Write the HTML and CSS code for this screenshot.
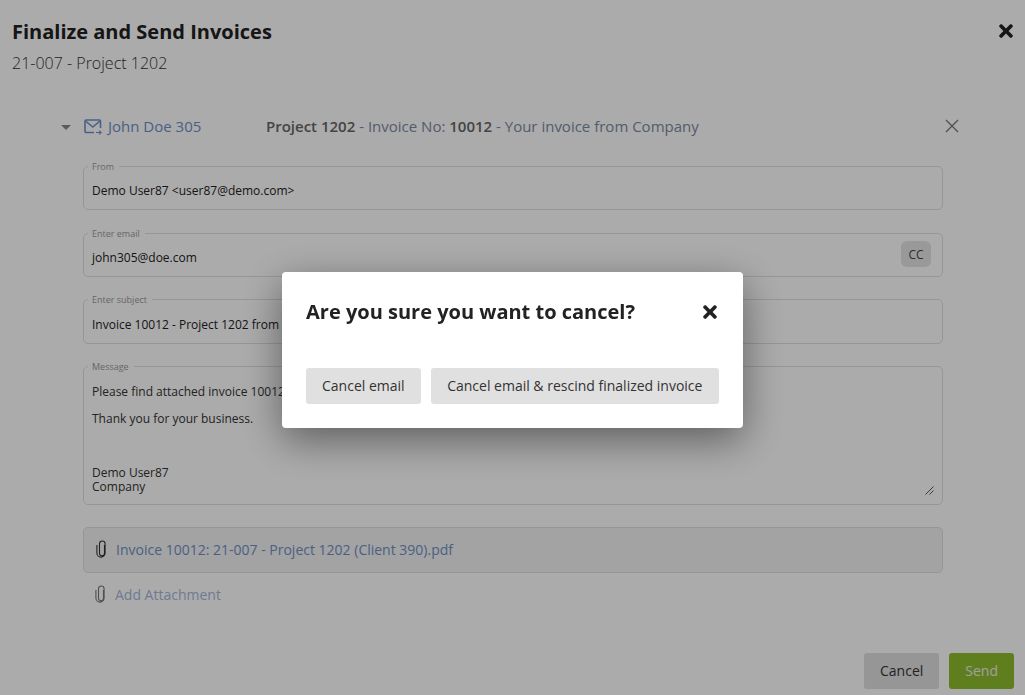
FILE: index.html
```html
<!DOCTYPE html>
<html lang="en">
<head>
<meta charset="utf-8">
<title>Finalize and Send Invoices</title>
<link rel="stylesheet" href="styles.css">
</head>
<body>
<main class="page">
  <header class="page-head">
    <div>
      <h1 class="page-title">Finalize and Send Invoices</h1>
      <p class="page-sub">21-007 - Project 1202</p>
    </div>
    <svg class="x-bold page-close" viewBox="0 0 352 512"><path d="M242.72 256l100.07-100.07c12.28-12.28 12.28-32.19 0-44.48l-22.24-22.24c-12.28-12.28-32.19-12.28-44.48 0L176 189.28 75.93 89.21c-12.28-12.28-32.19-12.28-44.48 0L9.21 111.45c-12.28 12.28-12.28 32.19 0 44.48L109.28 256 9.21 356.07c-12.28 12.28-12.28 32.19 0 44.48l22.24 22.24c12.28 12.28 32.2 12.28 44.48 0L176 322.72l100.07 100.07c12.28 12.28 32.2 12.28 44.48 0l22.24-22.24c12.28-12.28 12.28-32.19 0-44.48L242.72 256z"/></svg>
  </header>

  <section class="mail">
    <div class="mail-row">
      <span class="caret"></span>
      <svg class="mail-icon" viewBox="0 0 18 16"><path d="M10 13.500H2.200A1.200 1.200 0 0 1 1 12.300V2.200A1.200 1.200 0 0 1 2.200 1h13.100a1.200 1.200 0 0 1 1.200 1.200V9" /><path d="M1.500 2 8.800 8l7.200-6"/><path d="M12 13.500h5M15.200 11.600l1.900 1.900-1.900 1.900" class="thin"/></svg>
      <span class="mail-name">John Doe 305</span>
      <span class="mail-subject"><b>Project 1202</b> - Invoice No: <b>10012</b> - Your invoice from Company</span>
      <svg class="mail-close" viewBox="0 0 14 14"><path d="M1 1l12 12M13 1 1 13"/></svg>
    </div>

    <div class="fields">
      <fieldset class="field field-from">
        <legend>From</legend>
        <div class="value">Demo User87 &lt;user87@demo.com&gt;</div>
      </fieldset>
      <fieldset class="field field-email">
        <legend>Enter email</legend>
        <div class="value">john305@doe.com</div>
        <span class="cc">CC</span>
      </fieldset>
      <fieldset class="field field-subject">
        <legend>Enter subject</legend>
        <div class="value value-subject">Invoice 10012 - Project 1202 from Company</div>
      </fieldset>
      <fieldset class="field field-message">
        <legend>Message</legend>
        <div class="message">
          <p class="para">Please find attached invoice 10012.</p>
          <p class="para">Thank you for your business.</p>
          <p class="sign">Demo User87<br>Company</p>
        </div>
        <svg class="grip" viewBox="0 0 9 9"><path d="M0.500 8.500l8-8M4.500 8.500l4-4"/></svg>
      </fieldset>
      <div class="attachment">
        <svg class="clip" viewBox="0 0 12 18"><path d="M8.500 5v8.200a2.500 2.500 0 0 1-5 0V3.800a2.800 2.800 0 0 1 5.600 0V13a4.100 4.100 0 0 1-8.200 0V5"/></svg>
        <span>Invoice 10012: 21-007 - Project 1202 (Client 390).pdf</span>
      </div>
      <div class="add">
        <svg class="clip clip-add" viewBox="0 0 12 18"><path d="M8.500 5v8.200a2.500 2.500 0 0 1-5 0V3.800a2.800 2.800 0 0 1 5.600 0V13a4.100 4.100 0 0 1-8.200 0V5"/></svg>
        <span>Add Attachment</span>
      </div>
    </div>
  </section>

  <footer class="page-foot">
    <button class="btn btn-grey">Cancel</button>
    <button class="btn btn-send">Send</button>
  </footer>
</main>

<div class="overlay">
  <div class="modal">
    <div class="modal-head">
      <h2 class="modal-title">Are you sure you want to cancel?</h2>
      <svg class="x-bold modal-close" viewBox="0 0 352 512"><path d="M242.72 256l100.07-100.07c12.28-12.28 12.28-32.19 0-44.48l-22.24-22.24c-12.28-12.28-32.19-12.28-44.48 0L176 189.28 75.93 89.21c-12.28-12.28-32.19-12.28-44.48 0L9.21 111.45c-12.28 12.28-12.28 32.19 0 44.48L109.28 256 9.21 356.07c-12.28 12.28-12.28 32.19 0 44.48l22.24 22.24c12.28 12.28 32.2 12.28 44.48 0L176 322.72l100.07 100.07c12.28 12.28 32.2 12.28 44.48 0l22.24-22.24c12.28-12.28 12.28-32.19 0-44.48L242.72 256z"/></svg>
    </div>
    <div class="modal-actions">
      <button class="btn btn-grey">Cancel email</button>
      <button class="btn btn-grey btn-fill">Cancel email &amp; rescind finalized invoice</button>
    </div>
  </div>
</div>
</body>
</html>
```
FILE: styles.css
```css
* { box-sizing: border-box; }
html, body { margin: 0; height: 100%; }
body {
  background: #fff;
  color: #222;
  font-family: "Open Sans", sans-serif;
  overflow: hidden;
}
.page {
  height: 695px;
  display: flex;
  flex-direction: column;
  padding: 18px 11px 6px 12px;
}
.page-head {
  display: flex;
  justify-content: space-between;
  align-items: flex-start;
}
.page-title {
  margin: 0;
  font-size: 20px;
  line-height: 27px;
  font-weight: 700;
  color: #222;
}
.page-sub {
  margin: 7px 0 0;
  font-size: 16px;
  line-height: 22px;
  font-weight: 300;
  color: #333;
}
.x-bold { fill: #222; display: block; }
.page-close { width: 14px; height: 20px; margin-top: 3px; margin-right: 1px; }

.mail { margin-top: 39px; padding-left: 49px; }
.mail-row {
  display: flex;
  align-items: center;
  height: 26px;
  font-size: 15px;
}
.caret {
  width: 0;
  height: 0;
  border-left: 5px solid transparent;
  border-right: 5px solid transparent;
  border-top: 5px solid #888;
  margin-top: 3px;
}
.mail-icon {
  width: 18px;
  height: 16px;
  margin-left: 13px;
  margin-top: 1px;
  fill: none;
  stroke: #6f8fc8;
  stroke-width: 1.6;
}
.mail-icon .thin { stroke-width: 1.1; }
.mail-name { margin-left: 6px; width: 158px; color: #6f8fc4; }
.mail-subject { color: #7d8aa0; }
.mail-subject b { font-weight: 600; color: #666; }
.mail-close {
  width: 14px;
  height: 14px;
  margin-left: auto;
  margin-right: 55px;
  fill: none;
  stroke: #777;
  stroke-width: 1.3;
}

.fields { margin-left: 22px; width: 860px; margin-top: 20px; }
.field {
  position: relative;
  margin: 0;
  padding: 0 8px;
  border: 1px solid #e0e0e0;
  border-radius: 5px;
  min-width: 0;
}
.field legend {
  padding: 2px 5px 0 4px;
  margin-left: -4px;
  font-size: 9px;
  line-height: 12px;
  color: #999;
}
.value {
  font-size: 12px;
  line-height: 16px;
  color: #222;
  margin-top: 10px;
}
.value-subject { margin-top: 11px; }
.field-from { height: 51px; }
.field-email { height: 51px; margin-top: 16px; }
.field-subject { height: 52px; margin-top: 15px; }
.field-message { height: 146px; margin-top: 15px; }
.cc {
  position: absolute;
  right: 11px;
  top: 1px;
  width: 30px;
  height: 26px;
  border-radius: 6px;
  background: #e4e4e4;
  color: #444;
  font-size: 12px;
  display: flex;
  align-items: center;
  justify-content: center;
}
.message { font-size: 12px; line-height: 16px; color: #333; margin-top: 11px; }
.para { margin: 0 0 11px; }
.sign { margin: 39px 0 0; line-height: 14px; }
.grip {
  position: absolute;
  right: 8px;
  bottom: 9px;
  width: 9px;
  height: 9px;
  fill: none;
  stroke: #444;
  stroke-width: 0.9;
}
.attachment {
  display: flex;
  align-items: center;
  height: 46px;
  margin-top: 22px;
  padding: 0 0 2px 12px;
  background: #f4f4f4;
  border: 1px solid #e0e0e0;
  border-radius: 5px;
  font-size: 14px;
  color: #6f8fc4;
}
.clip {
  width: 12px;
  height: 18px;
  margin-right: 8px;
  fill: none;
  stroke: #333;
  stroke-width: 1.1;
  flex: none;
}
.add {
  display: flex;
  align-items: center;
  height: 22px;
  margin-top: 10px;
  padding-left: 12px;
  font-size: 14px;
  color: #a5b7dc;
}
.clip-add { stroke: #777; margin-right: 8px; }

.page-foot {
  margin-top: auto;
  display: flex;
  justify-content: flex-end;
  gap: 10px;
}
.btn {
  height: 36px;
  border: 0;
  border-radius: 3px;
  padding: 0 16px 1px;
  font-family: inherit;
  font-size: 14px;
  color: #333;
}
.btn-grey { background: #e0e0e0; }
.btn-send { background: #8ebe2e; color: #eee; }
.btn-fill { flex: 1; }

.overlay {
  position: fixed;
  inset: 0;
  padding-top: 5px;
  background: rgba(0, 0, 0, 0.33);
  display: flex;
  align-items: center;
  justify-content: center;
}
.modal {
  width: 461px;
  height: 156px;
  padding: 24px;
  background: #fff;
  border-radius: 4px;
  box-shadow: 0 12px 40px rgba(0, 0, 0, 0.45);
}
.modal-head {
  display: flex;
  justify-content: space-between;
  align-items: center;
  height: 32px;
}
.modal-title {
  margin: 0;
  font-size: 20px;
  line-height: 32px;
  font-weight: 700;
  color: #222;
}
.modal-close { width: 14px; height: 20px; margin-right: 2px; }
.modal-actions {
  display: flex;
  gap: 10px;
  margin-top: 40px;
}
```
